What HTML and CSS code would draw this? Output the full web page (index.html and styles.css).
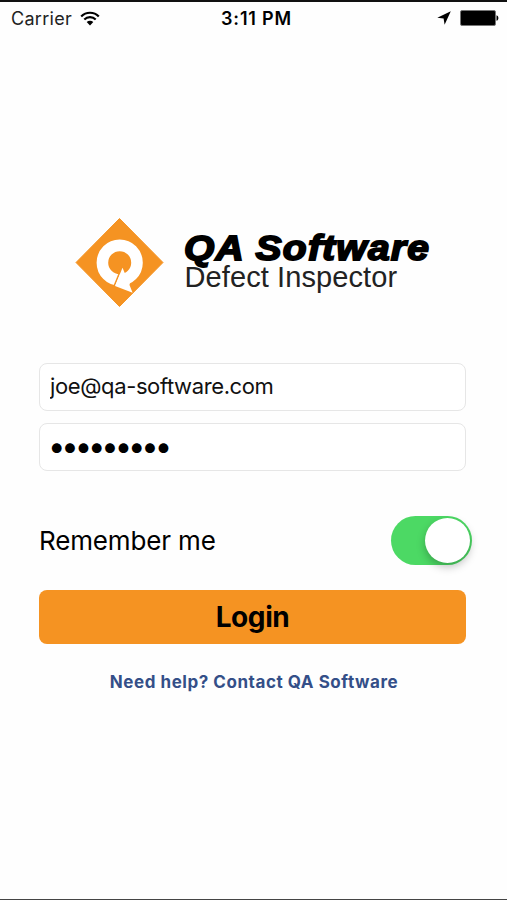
FILE: index.html
```
<!DOCTYPE html>
<html lang="en">
<head>
    <meta charset="UTF-8">
    <meta name="viewport" content="width=device-width, initial-scale=1.0">
    <title>QA Software Defect Inspector</title>
    <link rel="stylesheet" href="styles.css">
</head>
<body>
    <header class="status-bar">
        <div class="status-left">
            <span>Carrier</span>
            <svg class="icon-wifi" viewBox="0 0 20 15" width="20" height="15">
                <path d="M1.2 5.4C6 .5 14 .5 18.8 5.4M4.3 8.5C7.5 5.4 12.5 5.4 15.7 8.5" fill="none" stroke="#000" stroke-width="2.2"/>
                <path d="M6.7 11C8.6 9.3 11.4 9.3 13.3 11L10 14.4Z"/>
            </svg>
        </div>
        <span class="status-time">3:11 PM</span>
        <div class="status-right">
            <svg class="icon-location" viewBox="0 0 14 14" width="14" height="14">
                <path d="M13.8.2L.3 6.8L6.6 7.4L7.6 13.8Z"/>
            </svg>
            <svg class="icon-battery" viewBox="0 0 39 16" width="39" height="16">
                <rect x=".5" y=".5" width="35" height="15" rx="1.5" stroke="#777" fill="#000"/>
                <path d="M36.5 5.2C39 6 39 10 36.5 10.8Z"/>
            </svg>
        </div>
    </header>

    <main class="login-container">
        <div class="logo">
            <svg class="logo-mark" viewBox="0 0 90 90" width="90" height="90">
                <path d="M44.5 1.5L88 45.5L44.5 89.5L1 45.5Z" fill="#f59322" stroke="#f59322" stroke-linejoin="round"/>
                <circle cx="44.7" cy="45.7" r="17.3" fill="none" stroke="#fff" stroke-width="11.6"/>
                <path d="M46.6 51L38.4 71" stroke="#f59322" stroke-width="1.7"/>
                <path d="M47.5 50.8L40 68.9L57.6 75.7L54.5 68L56 60L50.2 57Z" fill="#fff"/>
            </svg>
            <div class="logo-text">
                <h1>QA Software</h1>
                <p>Defect Inspector</p>
            </div>
        </div>

        <form id="loginForm">
            <input type="email" class="form-control" value="joe@qa-software.com" aria-label="Email">
            <input type="password" class="form-control password" value="inspector" aria-label="Password">

            <label class="remember">
                <span>Remember me</span>
                <input type="checkbox" class="switch" checked>
            </label>

            <button type="submit" class="btn btn-primary">Login</button>
        </form>

        <a href="#" class="help-link">Need help? Contact QA Software</a>
    </main>
</body>
</html>
```
FILE: styles.css
```
:root {
    --orange: #f59322;
    --green: #4cd964;
    --link: #344f88;
    --border-color: #e6e6e6;
    --radius: 8px;
}

* {
    margin: 0;
    padding: 0;
    box-sizing: border-box;
}

body {
    height: 900px;
    background-color: #fefefe;
    border-top: 2px solid #111;
    border-bottom: 1px solid #444;
    color: #000;
    font-family: Inter, "Liberation Sans", sans-serif;
    overflow: hidden;
}

.status-bar {
    display: grid;
    grid-template-columns: 1fr auto 1fr;
    align-items: center;
    height: 32px;
    padding: 0 8px 0 11px;
    font-size: 18px;
}

.status-left,
.status-right {
    display: flex;
    align-items: center;
}

.status-left {
    gap: 8px;
    color: #222;
    letter-spacing: 0.3px;
}

.status-right {
    justify-content: flex-end;
    gap: 9px;
}

.status-time {
    padding-left: 3px;
    font-weight: 600;
    letter-spacing: 0.8px;
}

.login-container {
    padding: 183px 41px 0 39px;
}

.logo {
    display: flex;
    align-items: flex-start;
    gap: 19px;
    padding-left: 36px;
}

.logo-text {
    padding-top: 14px;
    font-family: "Liberation Sans", Arial, sans-serif;
    white-space: nowrap;
}

/* stretched to get the wide, black cut of the wordmark */
.logo h1 {
    font-size: 34.5px;
    line-height: 35px;
    font-style: italic;
    letter-spacing: 1.1px;
    word-spacing: 0;
    transform: scaleX(1.13);
    transform-origin: left;
    -webkit-text-stroke: 1.8px #000;
}

.logo p {
    padding-left: 0.5px;
    color: #222;
    font-size: 29px;
    line-height: 22px;
    letter-spacing: 0.1px;
}

form {
    display: flex;
    flex-direction: column;
    margin-top: 56px;
}

.form-control {
    width: 100%;
    height: 48px;
    margin-bottom: 12px;
    padding: 0 11px 2px 10px;
    border: 1px solid var(--border-color);
    border-radius: var(--radius);
    background: #fff;
    color: #111;
    font-family: inherit;
    font-size: 22px;
    letter-spacing: -0.38px;
    outline: none;
}

.password {
    padding-bottom: 4px;
    padding-left: 8px;
    color: #000;
    font-size: 31px;
    letter-spacing: -4.1px;
}

.remember {
    display: flex;
    align-items: center;
    justify-content: space-between;
    margin: 33px -6px 25px 0;
    font-size: 26px;
    letter-spacing: -0.15px;
}

.switch {
    appearance: none;
    width: 81px;
    height: 49px;
    padding: 2px;
    border-radius: 25px;
    background-color: var(--green);
}

.switch::before {
    content: "";
    display: block;
    width: 45px;
    height: 45px;
    border-radius: 50%;
    background: #fff;
    box-shadow: 0 4px 8px rgba(0, 0, 0, 0.25);
}

.switch:checked::before {
    margin-left: auto;
}

.btn {
    height: 54px;
    border: none;
    border-radius: var(--radius);
    font-family: inherit;
    font-size: 28px;
    font-weight: 700;
    letter-spacing: -0.4px;
    cursor: pointer;
}

.btn-primary {
    background-color: var(--orange);
    color: #000;
}

.help-link {
    display: block;
    margin-top: 27px;
    padding-left: 3px;
    color: var(--link);
    font-size: 17px;
    font-weight: 700;
    line-height: 22px;
    letter-spacing: 0.55px;
    text-align: center;
    text-decoration: none;
}
```
